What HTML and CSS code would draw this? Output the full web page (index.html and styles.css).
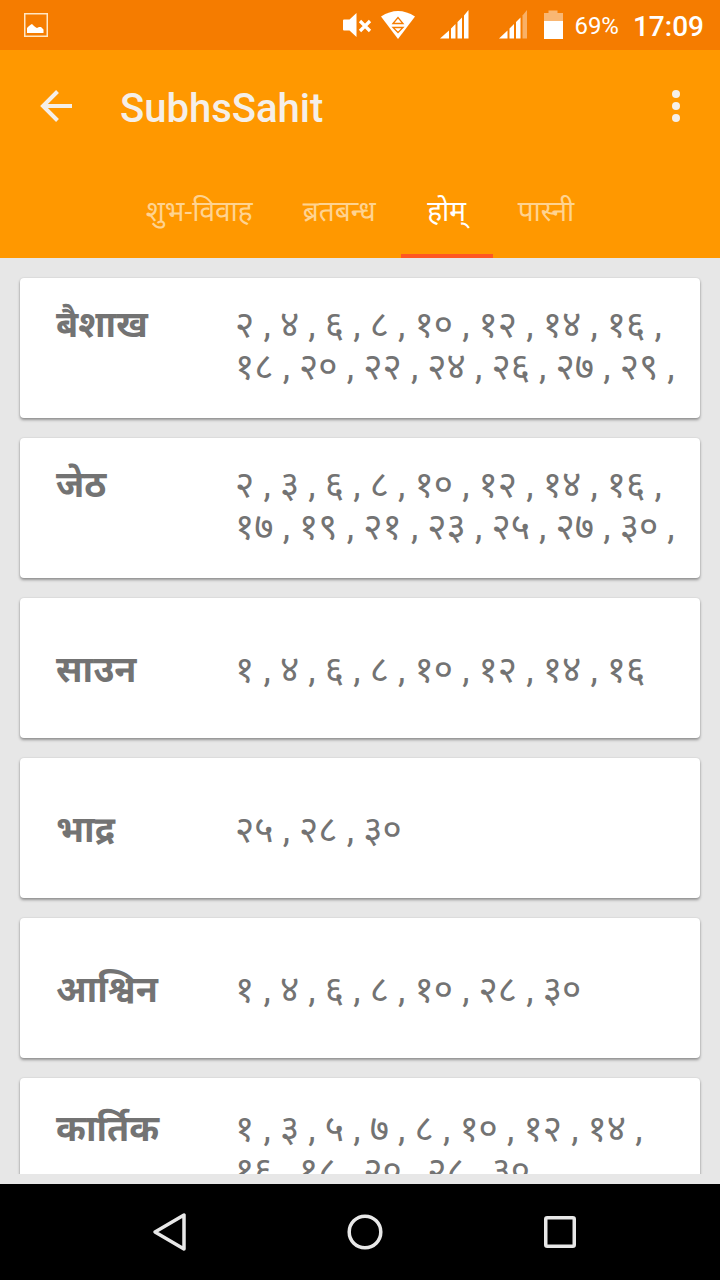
FILE: index.html
```html
<!DOCTYPE html>
<html lang="hi">
<head>
<meta charset="utf-8">
<meta name="viewport" content="width=device-width, initial-scale=1">
<title>SubhsSahit</title>
<link rel="stylesheet" href="styles.css">
</head>
<body>
<div class="screen">
  <div class="status">
    <svg class="status-photo" width="24" height="24" viewBox="0 0 24 24" aria-hidden="true"><rect x="0.75" y="0.75" width="22.5" height="22.5" fill="none" stroke="#ffe6c4" stroke-width="1.5"/><path d="M3 20v-5l2-2 2-1.500 1-.5 2 2 2 1.500 1 .5 2-1h2l1 1 1.500 1.500V20z" fill="#fff"/></svg>
    <svg class="status-icons" width="222" height="32" viewBox="342 9 222 32" aria-hidden="true">
      <g fill="#fff">
        <path d="M343 20.500q0-1 1-1h5.500l7-6.500v24l-7-6.500H344q-1 0-1-1z"/>
        <path d="M360 21l10 10M370 21l-10 10" stroke="#fff" stroke-width="3.200"/>
        <path d="M381 16.500Q398 5.500 415 16.500L398 39z"/>
        <path d="M440 38.500l9-8v8zM451 28.500l4.500-4.500v14.500H451zM457.500 22l4.500-4.500v21h-4.500zM464 15.500l4.500-5.500v28.500H464z"/>
        <path d="M499 38.500l8.500-8v8zM509.500 28.500l4.500-4.500v14.500h-4.500zM516 22l4.500-4.500v21H516z"/>
        <path d="M522.500 15.500l4.500-5.500v28.500h-4.500z" opacity=".4"/>
        <path d="M544 13h4.500v-2.500h9V13h5.500v8h-19z" opacity=".45"/>
        <path d="M544 21h19v18h-19z"/>
      </g>
      <path d="M393 23.500l5-6 5 6zM393 27.500h10l-5 5z" fill="none" stroke="#f57c00" stroke-width="1.300"/>
    </svg>
    <span class="battery">69%</span>
    <time class="clock">17:09</time>
  </div>

  <header class="bar">
    <div class="toolbar">
      <button class="icon-button" type="button" aria-label="Back">
        <svg width="34" height="34" viewBox="0 0 34 34"><path d="M33 17H4M18.500 2.500L4 17l14.500 14.500" fill="none" stroke="#f5efe8" stroke-width="4"/></svg>
      </button>
      <h1 class="title">SubhsSahit</h1>
      <button class="icon-button" type="button" aria-label="More options">
        <svg width="8" height="32" viewBox="0 0 8 32" fill="#f5f0ea"><circle cx="4" cy="4" r="4"/><circle cx="4" cy="16" r="4"/><circle cx="4" cy="28" r="4"/></svg>
      </button>
    </div>
    <nav class="tabs" role="tablist">
      <button class="tab" type="button" role="tab" aria-selected="false">शुभ-विवाह</button>
      <button class="tab" type="button" role="tab" aria-selected="false">ब्रतबन्ध</button>
      <button class="tab tab-active" type="button" role="tab" aria-selected="true">होम्</button>
      <button class="tab" type="button" role="tab" aria-selected="false">पास्नी</button>
    </nav>
  </header>

  <main class="list">
    <article class="card card-full"><h2 class="month">बैशाख</h2><p class="days">२&nbsp;, ४&nbsp;, ६&nbsp;, ८&nbsp;, १०&nbsp;, १२&nbsp;, १४&nbsp;, १६&nbsp;, १८&nbsp;, २०&nbsp;, २२&nbsp;, २४&nbsp;, २६&nbsp;, २७&nbsp;, २९&nbsp;,</p></article>
    <article class="card card-full"><h2 class="month">जेठ</h2><p class="days">२&nbsp;, ३&nbsp;, ६&nbsp;, ८&nbsp;, १०&nbsp;, १२&nbsp;, १४&nbsp;, १६&nbsp;, १७&nbsp;, १९&nbsp;, २१&nbsp;, २३&nbsp;, २५&nbsp;, २७&nbsp;, ३०&nbsp;,</p></article>
    <article class="card"><h2 class="month">साउन</h2><p class="days">१&nbsp;, ४&nbsp;, ६&nbsp;, ८&nbsp;, १०&nbsp;, १२&nbsp;, १४&nbsp;, १६</p></article>
    <article class="card"><h2 class="month">भाद्र</h2><p class="days">२५&nbsp;, २८&nbsp;, ३०</p></article>
    <article class="card"><h2 class="month">आश्विन</h2><p class="days">१&nbsp;, ४&nbsp;, ६&nbsp;, ८&nbsp;, १०&nbsp;, २८&nbsp;, ३०</p></article>
    <article class="card"><h2 class="month">कार्तिक</h2><p class="days">१&nbsp;, ३&nbsp;, ५&nbsp;, ७&nbsp;, ८&nbsp;, १०&nbsp;, १२&nbsp;, १४&nbsp;, १६&nbsp;, १८&nbsp;, २०&nbsp;, २८&nbsp;, ३०</p></article>
  </main>

  <footer class="navbar">
    <button class="nav-button" type="button" aria-label="Back"><svg width="36" height="40" viewBox="0 0 36 40"><path d="M32 3v34L3 20z" fill="none" stroke="#e8e8e8" stroke-width="3.500" stroke-linejoin="round"/></svg></button>
    <button class="nav-button" type="button" aria-label="Home"><svg width="36" height="36" viewBox="0 0 36 36"><circle cx="18" cy="18" r="15.800" fill="none" stroke="#e8e8e8" stroke-width="3.500"/></svg></button>
    <button class="nav-button" type="button" aria-label="Recent apps"><svg width="32" height="32" viewBox="0 0 32 32"><rect x="1.750" y="1.750" width="28.500" height="28.500" rx="1.500" fill="none" stroke="#e8e8e8" stroke-width="3.500"/></svg></button>
  </footer>
</div>
</body>
</html>
```
FILE: styles.css
```css
* {
  box-sizing: border-box;
}

body {
  margin: 0;
  font-family: Roboto, "Noto Sans Devanagari", "Noto Sans", sans-serif;
}

h1,
h2,
p {
  margin: 0;
}

button {
  padding: 0;
  border: 0;
  background: none;
  font: inherit;
}

svg {
  display: block;
}

.screen {
  display: flex;
  flex-direction: column;
  height: 100vh;
  background: #e7e7e7;
}

.status {
  display: flex;
  flex: none;
  align-items: center;
  height: 50px;
  padding: 0 16px 0 24px;
  background: #f57c00;
  color: #fff;
}

.status-icons {
  margin-left: auto;
}

.battery {
  margin: 2px 0 0 10px;
  font-size: 24px;
}

.clock {
  margin: 2px 0 0 14px;
  font-size: 28px;
  font-weight: 500;
}

.bar {
  flex: none;
  background: #ff9800;
}

.toolbar {
  display: flex;
  align-items: center;
  height: 112px;
  padding: 0 20px 0 32px;
}

.icon-button {
  display: grid;
  place-items: center;
  width: 48px;
  height: 48px;
}

.title {
  flex: 1;
  padding: 6px 0 0 40px;
  color: #f5efe8;
  font-size: 40px;
  font-weight: 500;
  line-height: 48px;
}

.tabs {
  display: flex;
  justify-content: center;
  height: 96px;
}

.tab {
  min-width: 92px;
  padding: 8px 25px 0;
  border-bottom: 4px solid transparent;
  color: #ffd391;
  font-size: 28px;
  line-height: 40px;
}

.tab-active {
  border-color: #ff5722;
  color: #fff;
}

.list {
  display: flex;
  flex: 1;
  flex-direction: column;
  gap: 20px;
  min-height: 0;
  margin-bottom: 10px;
  padding: 20px 20px 0;
  overflow: hidden;
}

.card {
  display: flex;
  flex: none;
  flex-wrap: wrap;
  align-items: baseline;
  align-content: center;
  min-height: 140px;
  padding: 4px 16px 0 36px;
  border-radius: 4px;
  background: #fff;
  box-shadow: 0 2px 3px rgba(0, 0, 0, 0.36), 0 0 2px rgba(0, 0, 0, 0.12);
  color: #737373;
  font-size: 37px;
  line-height: 42px;
}

.card-full {
  padding-top: 0;
  padding-bottom: 4px;
}

.month {
  width: 179px;
  font-size: 36px;
  font-weight: 700;
}

.days {
  flex: 1;
}

.navbar {
  display: flex;
  flex: none;
  align-items: center;
  justify-content: center;
  gap: 99px;
  height: 96px;
  padding-left: 10px;
  background: #000;
}

.nav-button {
  display: grid;
  place-items: center;
  width: 96px;
  height: 96px;
}
```
